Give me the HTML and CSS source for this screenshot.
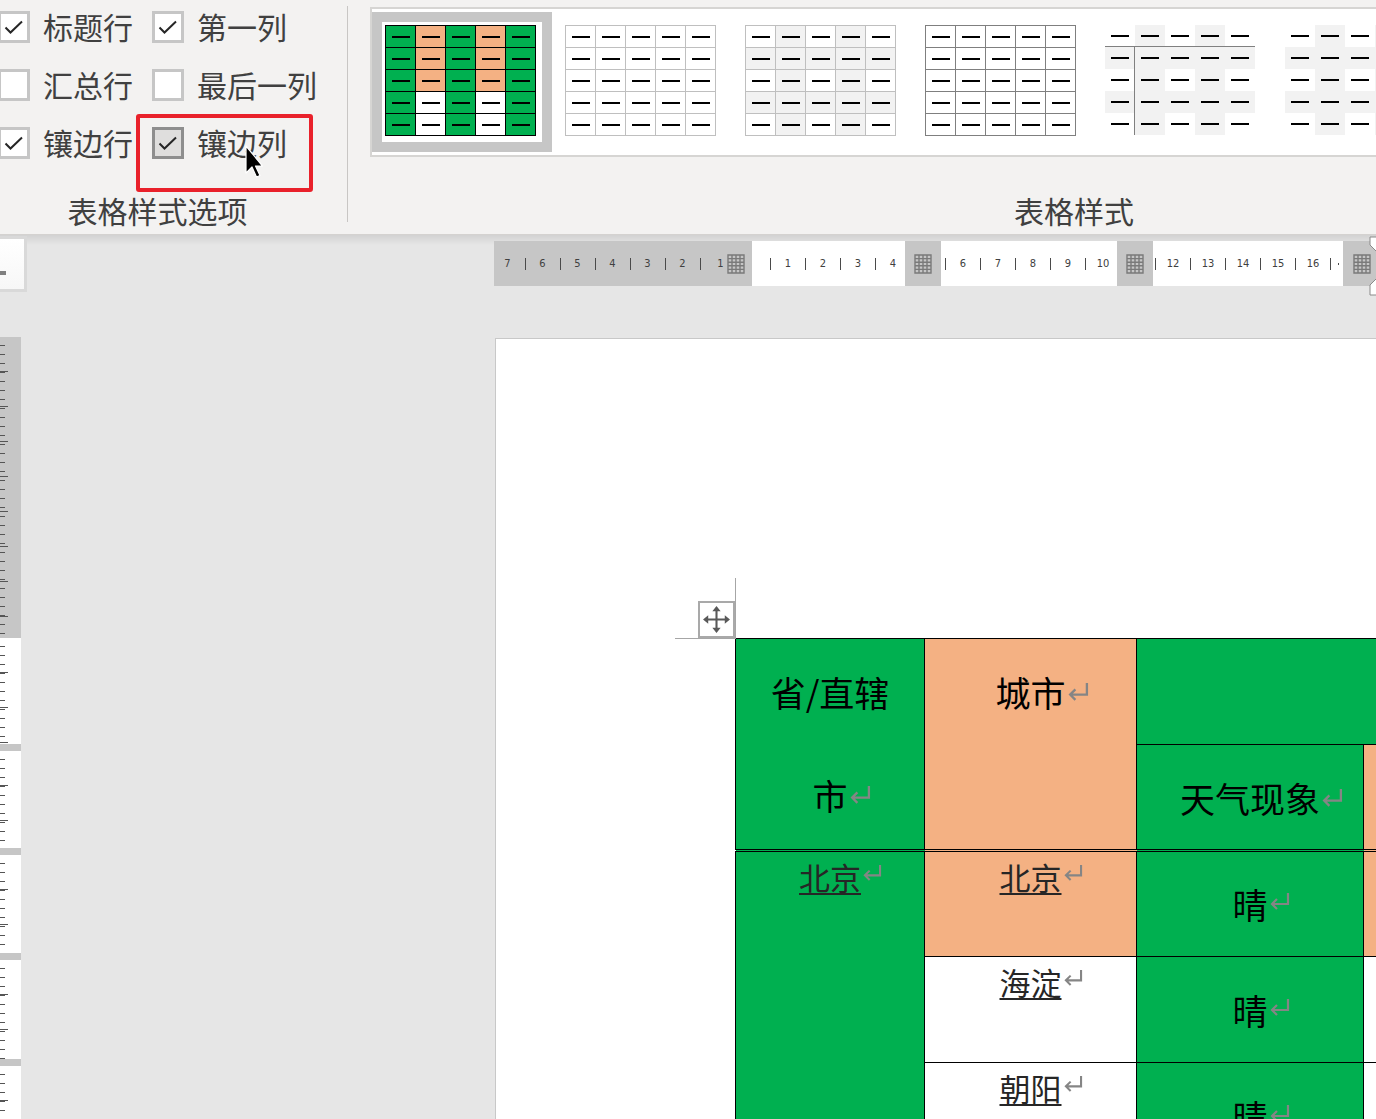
FILE: index.html
```html
<!DOCTYPE html>
<html lang="zh-CN">
<head>
<meta charset="utf-8">
<title>表格样式</title>
<link rel="stylesheet" href="styles.css">
</head>
<body>
<div class="app">
  <header class="ribbon">
    <section class="group group-options">
      <div class="options">
        <label class="opt"><span class="cb"><svg viewBox="0 0 26 26"><polyline points="4.5,13.5 9.5,18.5 21,7.5"/></svg></span><span class="lt">标题行</span></label>
        <label class="opt"><span class="cb"><svg viewBox="0 0 26 26"><polyline points="4.5,13.5 9.5,18.5 21,7.5"/></svg></span><span class="lt">第一列</span></label>
        <label class="opt"><span class="cb"></span><span class="lt">汇总行</span></label>
        <label class="opt"><span class="cb"></span><span class="lt">最后一列</span></label>
        <label class="opt"><span class="cb"><svg viewBox="0 0 26 26"><polyline points="4.5,13.5 9.5,18.5 21,7.5"/></svg></span><span class="lt">镶边行</span></label>
        <label class="opt"><span class="cb hover"><svg viewBox="0 0 26 26"><polyline points="4.5,13.5 9.5,18.5 21,7.5"/></svg></span><span class="lt">镶边列</span></label>
      </div>
      <div class="group-label">表格样式选项</div>
      <div class="callout"></div>
      <svg class="cursor" viewBox="0 0 20 34"><path d="M1 1 V28 L7 22 L11.5 32 L15 30.5 L10.5 21 H17.5 Z"/></svg>
    </section>
    <div class="sep"></div>
    <section class="group group-styles">
      <div class="gallery">
        <div class="gitem sel"><div class="inner">
          <div class="thumb t1">
            <i class="gr"></i><i class="or"></i><i class="gr"></i><i class="or"></i><i class="gr"></i>
            <i class="gr"></i><i class="or"></i><i class="gr"></i><i class="or"></i><i class="gr"></i>
            <i class="gr"></i><i class="or"></i><i class="gr"></i><i class="or"></i><i class="gr"></i>
            <i class="gr"></i><i></i><i class="gr"></i><i></i><i class="gr"></i>
            <i class="gr"></i><i></i><i class="gr"></i><i></i><i class="gr"></i>
          </div>
        </div></div>
        <div class="gitem"><div class="inner">
          <div class="thumb t2">
            <i></i><i></i><i></i><i></i><i></i>
            <i></i><i></i><i></i><i></i><i></i>
            <i></i><i></i><i></i><i></i><i></i>
            <i></i><i></i><i></i><i></i><i></i>
            <i></i><i></i><i></i><i></i><i></i>
          </div>
        </div></div>
        <div class="gitem"><div class="inner">
          <div class="thumb t3">
            <i></i><i class="s"></i><i></i><i class="s"></i><i></i>
            <i class="s"></i><i class="s"></i><i class="s"></i><i class="s"></i><i class="s"></i>
            <i></i><i class="s"></i><i></i><i class="s"></i><i></i>
            <i class="s"></i><i class="s"></i><i class="s"></i><i class="s"></i><i class="s"></i>
            <i></i><i class="s"></i><i></i><i class="s"></i><i></i>
          </div>
        </div></div>
        <div class="gitem"><div class="inner">
          <div class="thumb t4">
            <i></i><i></i><i></i><i></i><i></i>
            <i></i><i></i><i></i><i></i><i></i>
            <i></i><i></i><i></i><i></i><i></i>
            <i></i><i></i><i></i><i></i><i></i>
            <i></i><i></i><i></i><i></i><i></i>
          </div>
        </div></div>
        <div class="gitem"><div class="inner">
          <div class="thumb t5">
            <i class="hb"></i><i class="s hb"></i><i class="hb"></i><i class="s hb"></i><i class="hb"></i>
            <i class="s vb"></i><i class="s"></i><i class="s"></i><i class="s"></i><i class="s"></i>
            <i class="vb"></i><i class="s"></i><i></i><i class="s"></i><i></i>
            <i class="s vb"></i><i class="s"></i><i class="s"></i><i class="s"></i><i class="s"></i>
            <i class="vb"></i><i class="s"></i><i></i><i class="s"></i><i></i>
          </div>
        </div></div>
        <div class="gitem"><div class="inner">
          <div class="thumb t6">
            <i></i><i class="s"></i><i></i><i class="s"></i><i></i>
            <i class="s"></i><i class="s"></i><i class="s"></i><i class="s"></i><i class="s"></i>
            <i></i><i class="s"></i><i></i><i class="s"></i><i></i>
            <i class="s"></i><i class="s"></i><i class="s"></i><i class="s"></i><i class="s"></i>
            <i></i><i class="s"></i><i></i><i class="s"></i><i></i>
          </div>
        </div></div>
      </div>
      <div class="group-label">表格样式</div>
    </section>
  </header>

  <main class="workspace">
    <div class="corner"><span></span></div>

    <div class="hruler">
      <div class="seg seg-a">
        <span class="n first">7</span><span class="t"></span>
        <span class="n">6</span><span class="t"></span>
        <span class="n">5</span><span class="t"></span>
        <span class="n">4</span><span class="t"></span>
        <span class="n">3</span><span class="t"></span>
        <span class="n">2</span><span class="t"></span>
        <span class="n last">1</span>
        <svg class="gridico" viewBox="0 0 18 20"><path d="M1 1 H17 V19 H1 Z M5 1 V19 M9 1 V19 M13 1 V19 M1 4.6 H17 M1 8.2 H17 M1 11.8 H17 M1 15.4 H17"/></svg>
      </div>
      <div class="seg seg-b">
        <span class="t"></span><span class="n">1</span>
        <span class="t"></span><span class="n">2</span>
        <span class="t"></span><span class="n">3</span>
        <span class="t"></span><span class="n">4</span>
      </div>
      <div class="seg mk">
        <svg class="gridico" viewBox="0 0 18 20"><path d="M1 1 H17 V19 H1 Z M5 1 V19 M9 1 V19 M13 1 V19 M1 4.6 H17 M1 8.2 H17 M1 11.8 H17 M1 15.4 H17"/></svg>
      </div>
      <div class="seg seg-c">
        <span class="t"></span><span class="n">6</span>
        <span class="t"></span><span class="n">7</span>
        <span class="t"></span><span class="n">8</span>
        <span class="t"></span><span class="n">9</span>
        <span class="t"></span><span class="n">10</span>
      </div>
      <div class="seg mk">
        <svg class="gridico" viewBox="0 0 18 20"><path d="M1 1 H17 V19 H1 Z M5 1 V19 M9 1 V19 M13 1 V19 M1 4.6 H17 M1 8.2 H17 M1 11.8 H17 M1 15.4 H17"/></svg>
      </div>
      <div class="seg seg-d">
        <span class="t"></span><span class="n">12</span>
        <span class="t"></span><span class="n">13</span>
        <span class="t"></span><span class="n">14</span>
        <span class="t"></span><span class="n">15</span>
        <span class="t"></span><span class="n">16</span>
        <span class="t"></span><span class="dot"></span>
      </div>
      <div class="seg mk mk-end">
        <svg class="gridico" viewBox="0 0 18 20"><path d="M1 1 H17 V19 H1 Z M5 1 V19 M9 1 V19 M13 1 V19 M1 4.6 H17 M1 8.2 H17 M1 11.8 H17 M1 15.4 H17"/></svg>
      </div>
    </div>

    <svg class="indent" viewBox="0 0 10 60"><path d="M3 1 H10 V16 L3 9 Z M10 42 L3 49 V59 H10 Z"/></svg>

    <div class="vruler">
      <div class="vr-g vr-top"></div>
      <div class="vr-w h106"></div>
      <div class="vr-g band"></div>
      <div class="vr-w h97"></div>
      <div class="vr-g band"></div>
      <div class="vr-w h98"></div>
      <div class="vr-g band"></div>
      <div class="vr-w h99"></div>
      <div class="vr-g band"></div>
      <div class="vr-w rest"></div>
    </div>

    <div class="page">
      <div class="textarea">
        <span class="move-handle"><svg viewBox="0 0 28 28"><path class="ln" d="M14 4 V24 M4 14 H24"/><path d="M14 1 L10 6 H18 Z M14 27 L10 22 H18 Z M1 14 L6 10 V18 Z M27 14 L22 10 V18 Z"/></svg></span>
        <table class="doc">
          <colgroup><col class="c1"><col class="c2"><col class="c3"><col class="c4"></colgroup>
          <thead>
            <tr class="h1">
              <th rowspan="2" class="g top hd dbl">省/直辖<br>市<svg class="ret" viewBox="0 0 21 19"><path d="M19 1 V12 H3 M8 7 L3 12 L8 17"/></svg></th>
              <th rowspan="2" class="o top hd dbl">城市<svg class="ret" viewBox="0 0 21 19"><path d="M19 1 V12 H3 M8 7 L3 12 L8 17"/></svg></th>
              <th colspan="2" class="g"></th>
            </tr>
            <tr class="h2">
              <th class="g mid hd dbl">天气现象<svg class="ret" viewBox="0 0 21 19"><path d="M19 1 V12 H3 M8 7 L3 12 L8 17"/></svg></th>
              <th class="o dbl"></th>
            </tr>
          </thead>
          <tbody>
            <tr>
              <td rowspan="3" class="g top nm"><span class="link">北京</span><svg class="ret sm" viewBox="0 0 21 19"><path d="M19 1 V12 H3 M8 7 L3 12 L8 17"/></svg></td>
              <td class="o top nm"><span class="link">北京</span><svg class="ret sm" viewBox="0 0 21 19"><path d="M19 1 V12 H3 M8 7 L3 12 L8 17"/></svg></td>
              <td class="g mid wx">晴<svg class="ret wr" viewBox="0 0 21 19"><path d="M19 1 V12 H3 M8 7 L3 12 L8 17"/></svg></td>
              <td class="o"></td>
            </tr>
            <tr>
              <td class="w top nm"><span class="link">海淀</span><svg class="ret sm" viewBox="0 0 21 19"><path d="M19 1 V12 H3 M8 7 L3 12 L8 17"/></svg></td>
              <td class="g mid wx">晴<svg class="ret wr" viewBox="0 0 21 19"><path d="M19 1 V12 H3 M8 7 L3 12 L8 17"/></svg></td>
              <td class="w"></td>
            </tr>
            <tr>
              <td class="w top nm"><span class="link">朝阳</span><svg class="ret sm" viewBox="0 0 21 19"><path d="M19 1 V12 H3 M8 7 L3 12 L8 17"/></svg></td>
              <td class="g mid wx">晴<svg class="ret wr" viewBox="0 0 21 19"><path d="M19 1 V12 H3 M8 7 L3 12 L8 17"/></svg></td>
              <td class="w"></td>
            </tr>
          </tbody>
        </table>
      </div>
    </div>
  </main>
</div>
</body>
</html>
```

FILE: styles.css
```css
* { box-sizing: border-box; margin: 0; padding: 0; }
html, body { width: 1376px; height: 1119px; overflow: hidden; }
body {
  font-family: "Noto Sans CJK SC", "Noto Sans", sans-serif;
  background: #e6e6e6;
  color: #404040;
}
.app { width: 1376px; height: 1119px; overflow: hidden; }

/* ---------- ribbon ---------- */
.ribbon {
  display: flex;
  height: 235px;
  background: #f3f2f1;
  border-bottom: 1px solid #d4d2d0;
}
.group {
  position: relative;
  display: flex;
  flex-direction: column;
  flex-shrink: 0;
}
.group-options { margin-left: -32px; width: 379px; }
.options {
  display: grid;
  grid-template-columns: auto auto;
  justify-content: start;
  column-gap: 19px;
  row-gap: 26px;
  padding: 11px 0 0 30px;
}
.opt {
  display: flex;
  align-items: center;
  gap: 13px;
  height: 32px;
  font-size: 30px;
  line-height: 32px;
  color: #404040;
  white-space: nowrap;
}
.opt .lt { padding-bottom: 3px; }
.cb {
  flex: 0 0 32px;
  width: 32px;
  height: 32px;
  border: 3px solid #c6c6c6;
  background: #fff;
}
.cb.hover { background: #dfdedd; border-color: #8e8e8e; }
.cb svg { display: block; width: 26px; height: 26px; }
.cb polyline { fill: none; stroke: #262626; stroke-width: 2; }

.group-label {
  margin-top: auto;
  height: 44px;
  padding-bottom: 4px;
  line-height: 40px;
  font-size: 30px;
  color: #404040;
  text-align: center;
  white-space: nowrap;
}
.callout {
  position: absolute;
  left: 168px;
  top: 114px;
  width: 177px;
  height: 78px;
  border: 4px solid #e9212b;
  border-radius: 3px;
}
.cursor {
  position: absolute;
  left: 277px;
  top: 145px;
  width: 20px;
  height: 34px;
}
.cursor path { fill: #000; stroke: #fff; stroke-width: 1.2; stroke-linejoin: round; }

.sep {
  flex-shrink: 0;
  width: 1px;
  height: 216px;
  margin-top: 6px;
  background: #c8c6c4;
}
.group-styles { width: 1452px; }
.gallery {
  display: flex;
  width: 1100px;
  height: 150px;
  margin: 7px 0 0 22px;
  padding-top: 3px;
  border: 2px solid #d6d5d3;
  background: #fff;
  overflow: hidden;
}
.gitem { flex: 0 0 180px; height: 140px; padding: 10px; }
.gitem.sel { background: #c6c6c6; }
.gitem .inner { height: 120px; padding: 3px; background: #fff; }

.thumb {
  display: grid;
  width: 151px;
  height: 111px;
  grid-template-columns: repeat(5, 29px);
  grid-template-rows: repeat(5, 21px);
  gap: 1px;
  padding: 1px;
}
.t1 { background: #000; }
.t2, .t3 { background: #bfbfbf; }
.t4 { background: #7f7f7f; }
.t5, .t6 {
  width: 150px;
  height: 110px;
  grid-template-columns: repeat(5, 30px);
  grid-template-rows: repeat(5, 22px);
  gap: 0;
  padding: 0;
  background: #fff;
}
.thumb i { display: block; background: #fff; }
.thumb i::after {
  content: "";
  display: block;
  width: 18px;
  height: 2px;
  margin: 9.5px auto 0;
  background: #000;
}
.t5 i::after, .t6 i::after { margin-top: 10px; }
.thumb i.gr { background: #00b050; }
.thumb i.or { background: #f4b183; }
.thumb i.s { background: #f2f2f2; }
.thumb i.hb { border-bottom: 1px solid #808080; }
.thumb i.vb { border-right: 1px solid #808080; }

/* ---------- workspace ---------- */
.workspace {
  position: relative;
  display: grid;
  grid-template-columns: 495px 881px;
  grid-template-rows: 103px 781px;
  height: 884px;
  background: linear-gradient(#d2d2d2, #e6e6e6 10px, #e6e6e6);
}
.corner {
  grid-area: 1 / 1;
  align-self: start;
  justify-self: start;
  width: 30px;
  height: 56px;
  margin: 1px 0 0 -3px;
  border: 3px solid #d9d9d9;
  background: linear-gradient(#fff, #f7f7f7);
}
.corner span { display: block; width: 6px; height: 4px; margin-top: 32px; background: #808080; }

.hruler {
  grid-area: 1 / 2;
  align-self: start;
  display: flex;
  height: 45px;
  margin: 6px 0 0 -1px;
  overflow: hidden;
  font-family: "Liberation Sans Narrow", "DejaVu Sans Condensed", "Liberation Sans", sans-serif;
  font-size: 11px;
  color: #404040;
}
.seg {
  display: flex;
  align-items: center;
  flex-shrink: 0;
  height: 100%;
  overflow: hidden;
  background: #fff;
}
.seg .n { flex: 0 0 34px; text-align: center; line-height: 14px; }
.seg .t { flex: 0 0 1px; height: 12px; background: #4a4a4a; }
.seg .dot { flex: 0 0 1px; height: 2px; margin-left: 7px; background: #4a4a4a; }
.seg-a { width: 258px; background: #c6c6c6; }
.seg-a .first { margin-left: -3.5px; }
.seg-a .last { flex-basis: 26px; text-align: right; padding-right: 3px; }
.seg-b { width: 153px; padding-left: 18px; }
.seg-c { width: 176px; padding-left: 4px; }
.seg-d { width: 190px; padding-left: 2px; }
.mk { width: 36px; justify-content: center; background: #c6c6c6; }
.mk-end { flex: 1 0 33px; justify-content: flex-start; padding-left: 10px; }
.gridico { flex: 0 0 18px; width: 18px; height: 20px; }
.gridico path { fill: none; stroke: #7a7a7a; stroke-width: 1.4; }
.indent {
  position: absolute;
  left: 1367px;
  top: 1px;
  width: 10px;
  height: 60px;
}
.indent path { fill: #fff; stroke: #8a8a8a; stroke-width: 1; }

.vruler {
  grid-area: 2 / 1;
  display: flex;
  flex-direction: column;
  width: 21px;
  margin-top: -1px;
  overflow: hidden;
}
.vruler > div { flex-shrink: 0; }
.vr-g { background: #c6c6c6; }
.vr-w { background: #fff; }
.vr-top, .vr-w {
  background-image:
    repeating-linear-gradient(to bottom, transparent 0 8px, #555 8px 9px),
    repeating-linear-gradient(to bottom, transparent 0 34px, #555 34px 35px);
  background-size: 5px 100%, 8px 100%;
  background-repeat: no-repeat;
}
.vr-top { height: 301px; }
.band { height: 7px; }
.h106 { height: 106px; }
.h97 { height: 97px; }
.h98 { height: 98px; }
.h99 { height: 99px; }
.rest { flex: 1 0 60px; }

.page {
  grid-area: 2 / 2;
  background: #fff;
  border-left: 1px solid #c8c8c8;
  border-top: 1px solid #c8c8c8;
  overflow: hidden;
}
.textarea {
  position: relative;
  width: 855px;
  margin: 299px 0 0 239px;
}
.textarea::before {
  content: "";
  position: absolute;
  right: 100%;
  bottom: 100%;
  width: 60px;
  height: 60px;
  border-right: 1px solid #a6a6a6;
  border-bottom: 1px solid #a6a6a6;
  margin-right: -1px;
  margin-bottom: -1px;
}
.move-handle {
  position: absolute;
  right: 100%;
  bottom: 100%;
  width: 37px;
  height: 37px;
  margin-right: 0;
  margin-bottom: 0;
  padding: 2px;
  border: 2px solid #a9a9a9;
  background: #fff;
}
.move-handle svg { display: block; width: 29px; height: 29px; }
.move-handle path { fill: #595959; }
.move-handle path.ln { fill: none; stroke: #595959; stroke-width: 2; }

.doc {
  width: 855px;
  table-layout: fixed;
  border-collapse: collapse;
}
.c1 { width: 189px; }
.c2 { width: 212px; }
.c3 { width: 227px; }
.c4 { width: 227px; }
.doc th, .doc td {
  border: 1px solid #000;
  padding: 0;
  text-align: center;
  font-weight: 400;
  font-size: 35px;
  color: #000;
  white-space: nowrap;
}
.doc .g { background: #00b050; }
.doc .o { background: #f4b183; }
.doc .w { background: #fff; }
.doc .top { vertical-align: top; }
.doc .mid { vertical-align: middle; }
.doc .dbl { border-bottom: 3px double #000; }
.h1 { height: 106px; }
.h2 { height: 104px; }
.doc tbody tr { height: 106px; }
.doc .hd { line-height: 103px; padding-top: 1px; }
.doc .nm { font-size: 31px; line-height: 50px; color: #262626; }
.doc .wx { line-height: 40px; }
.link {
  text-decoration: underline;
  text-decoration-thickness: 2px;
  text-underline-offset: 3px;
}
.ret {
  display: inline-block;
  width: 22px;
  height: 20px;
  margin-left: 1px;
  margin-right: -23px;
  vertical-align: 5px;
}
.ret path { fill: none; stroke: #858585; stroke-width: 2.2; }
.ret.sm { width: 20px; height: 18px; margin-right: -21px; vertical-align: 8px; }
.ret.wr { width: 21px; height: 19px; margin-right: -22px; vertical-align: 8px; }
```
